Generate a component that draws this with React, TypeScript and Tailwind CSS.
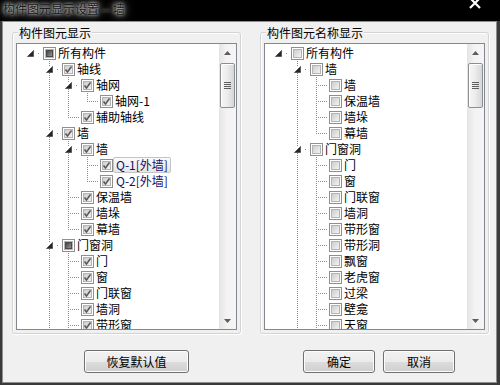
import React from "react";

type State = "checked" | "unchecked" | "mixed";

interface TreeNode {
  t: string;
  s?: State;
  sel?: boolean;
  c?: TreeNode[];
}

interface Row {
  t: string;
  s: State;
  sel?: boolean;
  level: number;
  exp: boolean;
  hasNext: boolean;
  anc: boolean[];
  first: boolean;
}

const LINE = "#8c8c8c";
const VISIBLE_ROWS = 18;

// flatten the tree into visible rows, remembering which ancestor levels still need a vertical line
function flatten(nodes: TreeNode[], def: State, level = 0, anc: boolean[] = [], out: Row[] = []): Row[] {
  nodes.forEach((n, i) => {
    const hasNext = i < nodes.length - 1;
    out.push({ t: n.t, s: n.s ?? def, sel: n.sel, level, exp: !!n.c, hasNext, anc, first: level === 0 && i === 0 });
    if (n.c) flatten(n.c, def, level + 1, [...anc, hasNext], out);
  });
  return out;
}

const leftTree: TreeNode[] = [
  {
    t: "所有构件",
    s: "mixed",
    c: [
      {
        t: "轴线",
        c: [{ t: "轴网", c: [{ t: "轴网-1" }] }, { t: "辅助轴线" }],
      },
      {
        t: "墙",
        c: [
          { t: "墙", c: [{ t: "Q-1[外墙]", sel: true }, { t: "Q-2[外墙]" }] },
          { t: "保温墙" },
          { t: "墙垛" },
          { t: "幕墙" },
        ],
      },
      {
        t: "门窗洞",
        s: "mixed",
        c: [{ t: "门" }, { t: "窗" }, { t: "门联窗" }, { t: "墙洞" }, { t: "带形窗" }, { t: "带形洞" }, { t: "飘窗" }],
      },
      { t: "柱" },
    ],
  },
];

const rightTree: TreeNode[] = [
  {
    t: "所有构件",
    c: [
      { t: "墙", c: [{ t: "墙" }, { t: "保温墙" }, { t: "墙垛" }, { t: "幕墙" }] },
      {
        t: "门窗洞",
        c: [
          { t: "门" },
          { t: "窗" },
          { t: "门联窗" },
          { t: "墙洞" },
          { t: "带形窗" },
          { t: "带形洞" },
          { t: "飘窗" },
          { t: "老虎窗" },
          { t: "过梁" },
          { t: "壁龛" },
          { t: "天窗" },
          { t: "洞口" },
        ],
      },
      { t: "柱" },
    ],
  },
];

// ─── Checkbox glyph ───────────────────────────────────────────────────────────
const CheckBox = ({ state }: { state: State }) => (
  <svg width="13" height="13" className="shrink-0" shapeRendering="crispEdges">
    <defs>
      <linearGradient id="cbIn" x1="0" y1="0" x2="1" y2="1">
        <stop offset="0" stopColor="#c9c9c9" />
        <stop offset="1" stopColor="#f6f6f6" />
      </linearGradient>
      <linearGradient id="cbMix" x1="0" y1="0" x2="1" y2="1">
        <stop offset="0" stopColor="#3c3c3c" />
        <stop offset="1" stopColor="#9c9c9c" />
      </linearGradient>
    </defs>
    <rect x="0.5" y="0.5" width="12" height="12" fill="#fff" stroke="#8f8f8f" />
    <rect x="2.5" y="2.5" width="8" height="8" fill="url(#cbIn)" stroke="#b4b4b4" />
    {state === "checked" && (
      <path d="M3.5 6.5 L5.5 9 L9.5 3.5" fill="none" stroke="#5a5a5a" strokeWidth="1.6" shapeRendering="auto" />
    )}
    {state === "mixed" && <rect x="3.5" y="3.5" width="6" height="6" fill="url(#cbMix)" stroke="#4a4a4a" />}
  </svg>
);

// ─── Tree row ─────────────────────────────────────────────────────────────────
const TreeRow = ({ r }: { r: Row }) => {
  const lx = 13 + 19 * r.level;
  return (
    <div className="h-4 flex items-center whitespace-nowrap">
      <svg width={lx + 13} height="16" className="shrink-0" shapeRendering="crispEdges">
        {r.anc.map((on, a) =>
          on ? (
            <line key={a} x1={13 + 19 * a + 0.5} y1="0" x2={13 + 19 * a + 0.5} y2="16" stroke={LINE} strokeDasharray="1 1" />
          ) : null
        )}
        {!r.first && <line x1={lx + 0.5} y1="0" x2={lx + 0.5} y2={r.exp ? 5 : 8} stroke={LINE} strokeDasharray="1 1" />}
        {r.hasNext && <line x1={lx + 0.5} y1={r.exp ? 12 : 8} x2={lx + 0.5} y2="16" stroke={LINE} strokeDasharray="1 1" />}
        {r.exp ? (
          <>
            <path
              d={`M${lx + 3.5} 5.5 L${lx + 3.5} 11.5 L${lx - 2.5} 11.5 Z`}
              fill="#262626"
              stroke="#5a5a5a"
              shapeRendering="auto"
            />
            <rect x={lx + 8} y="8" width="1" height="1" fill={LINE} />
          </>
        ) : (
          <line x1={lx} y1="8.5" x2={lx + 12} y2="8.5" stroke={LINE} strokeDasharray="1 1" />
        )}
      </svg>
      <CheckBox state={r.s} />
      <span
        className={
          r.sel
            ? "h-4 pl-[2px] pr-[2px] border border-[#c4c4c4] rounded-[2px] bg-[linear-gradient(#fbfbfb,#e6e6e6)] leading-[14px] text-[#10106a]"
            : r.t.startsWith("Q-")
            ? "h-4 pl-[2px] pr-[2px] border border-transparent leading-[14px] text-[#10106a]"
            : "h-4 pl-[1px] pr-[2px] border border-transparent leading-[14px] text-black"
        }
      >
        {r.t}
      </span>
    </div>
  );
};

// ─── Scrollbar ────────────────────────────────────────────────────────────────
const Scrollbar = () => (
  <div className="w-[17px] shrink-0 flex flex-col bg-[linear-gradient(to_right,#e4e4e4,#f3f3f3_45%,#f5f5f5)]">
    <div className="h-[17px] flex items-center justify-center">
      <svg width="7" height="4">
        <path d="M0 4 L3.5 0 L7 4 Z" fill="#5c5c5c" />
      </svg>
    </div>
    <div className="mt-[2px] mx-[1px] h-[45px] rounded-[2px] border border-[#8e8f8f] bg-[linear-gradient(to_right,#f6f6f6,#ededed_45%,#d6d6d6)] shadow-[inset_1px_1px_0_#fff] flex flex-col items-center justify-center gap-[1px]">
      <div className="w-[7px] h-[1px] bg-[#5e5e5e]" />
      <div className="w-[7px] h-[1px] bg-[#5e5e5e]" />
      <div className="w-[7px] h-[1px] bg-[#5e5e5e]" />
      <div className="w-[7px] h-[1px] bg-[#5e5e5e]" />
    </div>
    <div className="flex-1" />
    <div className="h-[17px] flex items-center justify-center">
      <svg width="7" height="4">
        <path d="M0 0 L3.5 4 L7 0 Z" fill="#5c5c5c" />
      </svg>
    </div>
  </div>
);

// ─── Group box with tree ──────────────────────────────────────────────────────
const GroupTree = ({ title, rows }: { title: string; rows: Row[] }) => (
  <fieldset className="w-[229px] border border-[#d3d3d3] rounded-[3px] shadow-[inset_1px_1px_0_#fff,1px_1px_0_#fff] px-[3px] pb-[3px]">
    <legend className="ml-[2px] px-[1px] bg-[#f0f0f0] text-[12px] leading-[13px] text-black">{title}</legend>
    <div className="mt-[4px] w-[221px] h-[287px] border border-[#828790] bg-white flex">
      <div className="flex-1 overflow-hidden pt-[1px] text-[12px]">
        {rows.slice(0, VISIBLE_ROWS).map((r, i) => (
          <TreeRow key={i} r={r} />
        ))}
      </div>
      <Scrollbar />
    </div>
  </fieldset>
);

const Btn = ({ label, w }: { label: string; w: string }) => (
  <div
    className={`${w} h-[23px] rounded-[3px] border border-[#707070] bg-[linear-gradient(#f2f2f2_0%,#ebebeb_50%,#dddddd_50%,#cfcfcf_100%)] shadow-[inset_0_0_0_1px_#fcfcfc] flex items-center justify-center text-[12px] text-black`}
  >
    {label}
  </div>
);

export default function App() {
  const left = flatten(leftTree, "checked");
  const right = flatten(rightTree, "unchecked");

  return (
    <div className="w-[500px] h-[385px] bg-black flex flex-col overflow-hidden font-['Noto_Sans_CJK_SC','Noto_Sans',sans-serif]">
      {/* title bar */}
      <div className="h-[21px] shrink-0 flex items-start justify-between">
        <span className="ml-[3px] mt-[2px] text-[12px] leading-[14px] text-[#1a1a1a] [text-shadow:0_0_3px_rgba(255,255,255,0.9),0_0_7px_rgba(255,255,255,0.7),0_0_12px_rgba(255,255,255,0.5)]">
          构件图元显示设置 -- 墙
        </span>
        <svg width="12" height="10" className="mr-[19px] -mt-[1px]">
          <path d="M1 -1 L11 9 M11 -1 L1 9" stroke="#fff" strokeWidth="2.2" />
        </svg>
      </div>

      {/* window frame */}
      <div className="flex-1 flex bg-[#3a3a3a] pl-[2px] pr-[3px] pb-[2px]">
        <div className="flex-1 flex flex-col border border-[#8e8e8e] bg-[#f0f0f0]">
          <div className="flex gap-[19px] pl-[9px] pt-[4px]">
            <GroupTree title="构件图元显示" rows={left} />
            <GroupTree title="构件图元名称显示" rows={right} />
          </div>
          <div className="flex mt-[16px] pl-[81px]">
            <Btn label="恢复默认值" w="w-[105px]" />
            <div className="ml-[114px]">
              <Btn label="确定" w="w-[72px]" />
            </div>
            <div className="ml-[8px]">
              <Btn label="取消" w="w-[72px]" />
            </div>
          </div>
        </div>
      </div>
    </div>
  );
}
